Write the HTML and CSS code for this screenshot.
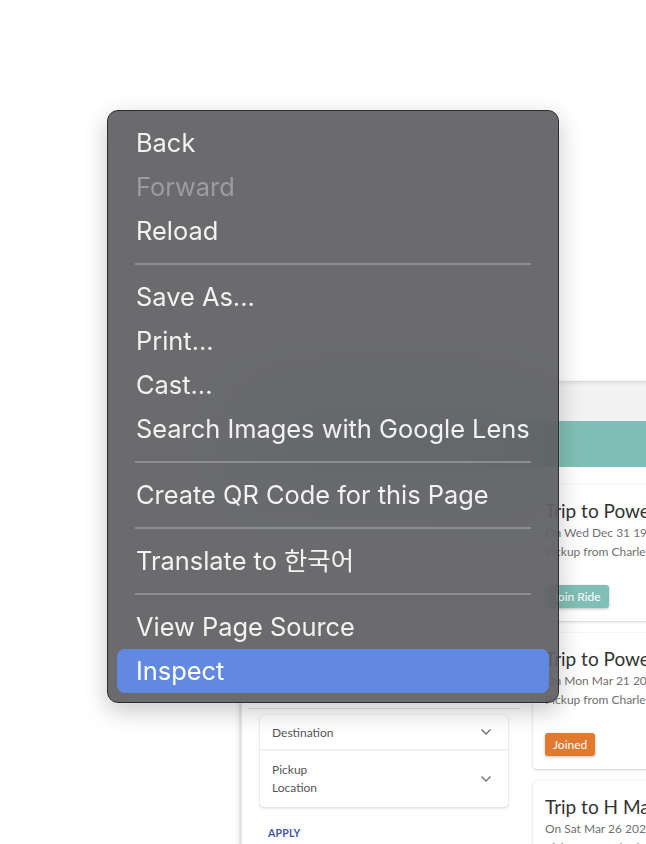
FILE: index.html
```html
<!DOCTYPE html>
<html>
<head>
<meta charset="utf-8">
<link rel="stylesheet" href="styles.css">
</head>
<body>
<div class="desk">
  <div class="window">
    <div class="appbar"></div>
    <div class="banner"></div>
    <div class="content">
      <aside class="sidebar">
        <div class="sidebar-top"></div>
        <div class="rule"></div>
        <div class="filters">
          <div class="filter-row">
            <span>Destination</span>
            <svg class="chev" width="12" height="8" viewBox="0 0 12 8"><path d="M1.5 1.5 L6 6 L10.5 1.5" fill="none" stroke="#707070" stroke-width="1.4"/></svg>
          </div>
          <div class="filter-row tall">
            <span>Pickup<br>Location</span>
            <svg class="chev" width="12" height="8" viewBox="0 0 12 8"><path d="M1.5 1.5 L6 6 L10.5 1.5" fill="none" stroke="#707070" stroke-width="1.4"/></svg>
          </div>
        </div>
        <div class="apply">APPLY</div>
      </aside>
      <main class="cards">
        <div class="card">
          <div class="card-title">Trip to Powell Butte</div>
          <div class="card-sub">On Wed Dec 31 1969</div>
          <div class="card-sub">Pickup from Charles Hall</div>
          <div class="btn btn-join">Join Ride</div>
        </div>
        <div class="card">
          <div class="card-title">Trip to Powell Butte</div>
          <div class="card-sub">On Mon Mar 21 2022</div>
          <div class="card-sub">Pickup from Charles Hall</div>
          <div class="btn btn-joined">Joined</div>
        </div>
        <div class="card">
          <div class="card-title">Trip to H Mart</div>
          <div class="card-sub">On Sat Mar 26 2022</div>
          <div class="card-sub">Pickup from Charles Hall</div>
        </div>
      </main>
    </div>
  </div>

  <div class="menu">
    <div class="item">Back</div>
    <div class="item disabled">Forward</div>
    <div class="item">Reload</div>
    <div class="sep"></div>
    <div class="item">Save As...</div>
    <div class="item">Print...</div>
    <div class="item">Cast...</div>
    <div class="item">Search Images with Google Lens</div>
    <div class="sep"></div>
    <div class="item">Create QR Code for this Page</div>
    <div class="sep"></div>
    <div class="item">Translate to 한국어</div>
    <div class="sep"></div>
    <div class="item">View Page Source</div>
    <div class="item active">Inspect</div>
  </div>
</div>
</body>
</html>
```

FILE: styles.css
```css
* { box-sizing: border-box; }
html, body {
  margin: 0;
  padding: 0;
  width: 646px;
  height: 844px;
  overflow: hidden;
  background: #ffffff;
}
.desk {
  position: relative;
  width: 646px;
  height: 844px;
  overflow: hidden;
  font-family: "Lato", "Noto Sans", sans-serif;
}

/* background browser window */
.window {
  position: absolute;
  left: 239px;
  top: 381px;
  width: 440px;
  height: 470px;
  background: #ffffff;
  border-left: 3px solid #e4e4e4;
  border-top: 1px solid #dcdcdc;
  box-shadow: -2px 0 4px rgba(0,0,0,0.06);
}
.appbar {
  height: 39px;
  background: #f2f2f2;
  box-shadow: inset 0 2px 3px rgba(0,0,0,0.06);
}
.banner {
  height: 46px;
  background: #80bfb7;
}
.content {
  display: flex;
  align-items: flex-start;
}
.sidebar {
  width: 278px;
  flex: none;
  padding-left: 6px;
}
.sidebar-top {
  height: 241px;
}
.rule {
  height: 1px;
  background: #e2e2e2;
}
.filters {
  margin: 6px 12px 0;
  background: #fff;
  border-radius: 4px;
  box-shadow: 0 1px 3px rgba(0,0,0,0.18), 0 0 1px rgba(0,0,0,0.1);
}
.filter-row {
  display: flex;
  align-items: center;
  justify-content: space-between;
  height: 36px;
  padding: 0 16px 0 12px;
  font-size: 12px;
  color: #555;
  border-bottom: 2px solid #f0f0f0;
}
.filter-row.tall {
  height: 56px;
  line-height: 18px;
  border-bottom: none;
}
.chev { display: block; }
.apply {
  margin: 20px 0 0 20px;
  font-size: 10.5px;
  font-weight: 700;
  color: #4456a8;
  letter-spacing: 0.2px;
}
.cards {
  margin-left: 13px;
  padding-top: 18px;
  width: 240px;
  flex: none;
  display: flex;
  flex-direction: column;
  gap: 12px;
}
.card {
  height: 136px;
  padding: 14px 12px 12px;
  background: #fff;
  border-radius: 4px;
  box-shadow: 0 1px 3px rgba(0,0,0,0.18), 0 0 1px rgba(0,0,0,0.1);
  white-space: nowrap;
}
.card-title {
  font-size: 19px;
  line-height: 24px;
  color: #333;
}
.card-sub {
  font-size: 12px;
  line-height: 19px;
  color: #707070;
}
.btn {
  display: inline-block;
  margin-top: 24px;
  height: 23px;
  line-height: 23px;
  padding: 0 8px;
  border-radius: 3px;
  font-size: 12px;
  color: #fff;
  box-shadow: 0 1px 3px rgba(0,0,0,0.25);
}
.btn-join { background: #80bfb7; }
.btn-joined { background: #e07a30; }

/* context menu overlay */
.menu {
  position: absolute;
  left: 107px;
  top: 110px;
  width: 452px;
  height: 593px;
  padding: 10px 9px 8px;
  border: 1px solid #2c2c2e;
  border-radius: 11px;
  background: rgba(86, 87, 90, 0.88);
  backdrop-filter: blur(50px);
  -webkit-backdrop-filter: blur(50px);
  box-shadow: 0 0 0 1px rgba(255,255,255,0.12), 0 8px 24px rgba(0,0,0,0.22);
  font-family: "Inter", "Noto Sans CJK KR", sans-serif;
}
.item {
  height: 44px;
  line-height: 44px;
  padding-left: 19px;
  font-size: 25.4px;
  color: #f2f2f2;
  border-radius: 8px;
  white-space: nowrap;
}
.item.disabled { color: #9c9d9f; }
.item.active { background: #6289e1; color: #ffffff; }
.sep {
  height: 22px;
  padding: 10px 18px;
}
.sep::before {
  content: "";
  display: block;
  height: 2px;
  background: #8c8d90;
}
```
